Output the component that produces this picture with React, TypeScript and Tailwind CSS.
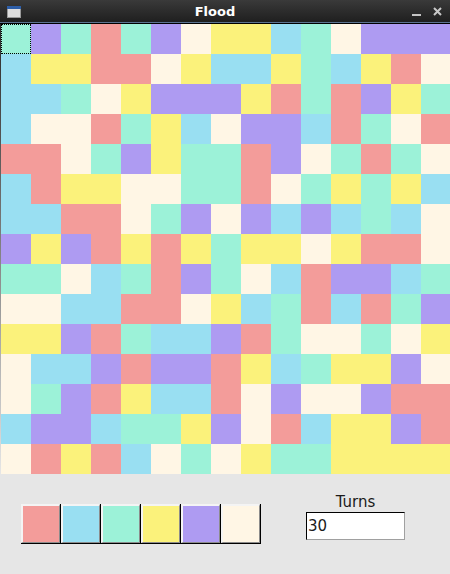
const R = "bg-[#f39c9a]";
const B = "bg-[#99dff2]";
const G = "bg-[#9cf2d8]";
const Y = "bg-[#fbf27b]";
const P = "bg-[#ae9bf2]";
const C = "bg-[#fff6e5]";

const palette: Record<string, string> = { R, B, G, Y, P, C };

const rows = [
  "GPGRGPCYYBGCPPP",
  "BYYRRCYBBYGBYRC",
  "BBGCYPPPYRGRPYG",
  "BCCRGYBCPPBRGCR",
  "RRCGPYGGRPCGRGC",
  "BRYYCCGGRCGYGYB",
  "BBRRCGPCPBPBGBC",
  "PYPRYRYGYYCYRRC",
  "GGCBGRPGCBRPPBG",
  "CCBBRRCYBGRBRGP",
  "YYPRGBBPRGCCGCY",
  "CBBPRPPRYBGYYPC",
  "CGPRYBBRCPCCPRR",
  "BPPBGGYPCRBYYPR",
  "CRYRBCGCYGGYYYY",
];

const swatches = [R, B, G, Y, P, C];

export default function App() {
  return (
    <div className="w-[450px] h-[574px] flex flex-col overflow-hidden bg-[#e6e6e6] font-['DejaVu_Sans',sans-serif]">
      <div className="h-6 shrink-0 flex flex-col">
        <div className="h-[22px] relative flex items-center justify-center pr-5 bg-gradient-to-b from-[#3a3a3a] to-[#1f1f1f]">
          <svg className="absolute left-[7px] top-[6px]" width="14" height="12" viewBox="0 0 14 12">
            <rect x="0" y="0" width="14" height="12" fill="#9a9a9a" />
            <rect x="0" y="0" width="14" height="3" fill="#2d5ea8" />
            <rect x="1" y="3" width="12" height="8" fill="#dedede" />
          </svg>
          <span className="text-[13px] leading-none font-bold text-white">Flood</span>
          <div className="absolute left-[412px] top-[14px] w-[9px] h-[2px] bg-[#c4c4c4]" />
          <svg className="absolute left-[433px] top-[7px]" width="9" height="9" viewBox="0 0 9 9">
            <path d="M1 1L8 8M8 1L1 8" stroke="#c8c8c8" strokeWidth="2" />
          </svg>
        </div>
        <div className="h-px bg-[#5b7391]" />
        <div className="h-px bg-black" />
      </div>
      <div className="flex h-[450px] shrink-0">
        <div className="w-px shrink-0 bg-gradient-to-b from-[#2a2a2a] to-[#e6e6e6]" />
        <div className="grid grid-cols-[repeat(15,30px)] grid-rows-[repeat(15,30px)] shrink-0">
          {rows.map((row, r) =>
            row.split("").map((c, i) => (
              <div key={`${r}-${i}`} className={palette[c]}>
                {r === 0 && i === 0 ? <div className="h-full border border-dotted border-black" /> : null}
              </div>
            ))
          )}
        </div>
      </div>
      <div className="flex-1 flex items-start pl-[21px]">
        <div className="flex mt-[30px]">
          {swatches.map((s) => (
            <div key={s} className="w-10 h-10 border-r border-b border-black">
              <div className={`h-full border-t-2 border-l-2 border-r border-b border-t-[#f4f4f4] border-l-[#f4f4f4] border-r-[#8c8c8c] border-b-[#8c8c8c] ${s}`} />
            </div>
          ))}
        </div>
        <div className="ml-[45px] mt-[19px] w-[99px] flex flex-col items-center">
          <div className="text-[15px] leading-[19px] text-[#1a1a1a]">Turns</div>
          <div className="w-full h-[28px] bg-white border border-[#a0a0a0] border-t-black border-l-black flex items-center pl-px text-[15px] text-[#1a1a1a]">
            30
          </div>
        </div>
      </div>
    </div>
  );
}
